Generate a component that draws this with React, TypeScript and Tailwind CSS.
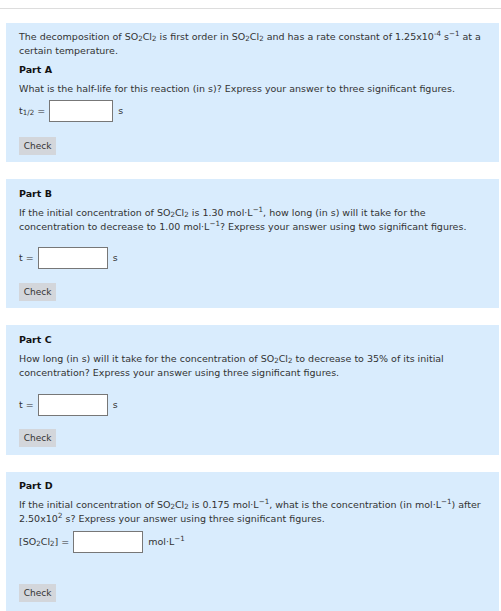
import type { ReactNode } from 'react'

const sub = (s: string) => <sub className="relative top-[1px] align-baseline text-[0.75em] leading-none">{s}</sub>
const sup = (s: string) => <sup className="relative -top-[4px] align-baseline text-[0.75em] leading-none">{s}</sup>

const so2cl2 = (
  <>
    SO{sub('2')}Cl{sub('2')}
  </>
)

const molL = (
  <>
    mol·L{sup('−1')}
  </>
)

function Panel({ children, className = '' }: { children: ReactNode; className?: string }) {
  return <div className={`ml-[6px] mr-[2px] bg-[#d9ecfd] pl-[13px] pr-[16px] ${className}`}>{children}</div>
}

function AnswerRow({ label, unit, inputW = 'w-[64px]' }: { label: ReactNode; unit: ReactNode; inputW?: string }) {
  return (
    <div className="flex items-center">
      <span className="mr-[4px]">{label}</span>
      <input
        type="text"
        className={`h-[22px] ${inputW} border border-[#777] bg-white outline-none`}
      />
      <span className="ml-[5px]">{unit}</span>
    </div>
  )
}

function CheckButton() {
  return (
    <button
      type="button"
      className="h-[18px] w-[37px] bg-[#d3d6db] text-[9px] text-[#333]"
    >
      Check
    </button>
  )
}

export default function App() {
  return (
    <div
      className="h-[611px] w-[501px] overflow-hidden bg-white pt-[8px] text-[9.5px] leading-[14px] text-[#333]"
      style={{ fontFamily: '"DejaVu Sans", Verdana, sans-serif' }}
    >
      <div className="h-px bg-[#ddd]" />

      <Panel className="mt-[14px] h-[139px] pt-[7px]">
        <p>
          The decomposition of {so2cl2} is first order in {so2cl2} and has a rate constant of 1.25x10
          {sup('-4')} s{sup('−1')} at a certain temperature.
        </p>
        <h3 className="mt-[5px] font-bold text-[#111]">Part A</h3>
        <p className="mt-[5px]">
          What is the half-life for this reaction (in s)? Express your answer to three significant figures.
        </p>
        <div className="mt-[4px]">
          <AnswerRow
            label={
              <>
                t{sub('1/2')} =
              </>
            }
            unit="s"
          />
        </div>
        <div className="mt-[15px]">
          <CheckButton />
        </div>
      </Panel>

      <Panel className="mt-[17px] h-[129px] pt-[8px]">
        <h3 className="font-bold text-[#111]">Part B</h3>
        <p className="mt-[5px]">
          If the initial concentration of {so2cl2} is 1.30 {molL}, how long (in s) will it take for the
          concentration to decrease to 1.00 {molL}? Express your answer using two significant figures.
        </p>
        <div className="mt-[13px]">
          <AnswerRow label="t =" unit="s" inputW="w-[70px]" />
        </div>
        <div className="mt-[14px]">
          <CheckButton />
        </div>
      </Panel>

      <Panel className="mt-[17px] h-[130px] pt-[8px]">
        <h3 className="font-bold text-[#111]">Part C</h3>
        <p className="mt-[5px]">
          How long (in s) will it take for the concentration of {so2cl2} to decrease to 35% of its initial
          concentration? Express your answer using three significant figures.
        </p>
        <div className="mt-[14px]">
          <AnswerRow label="t =" unit="s" inputW="w-[70px]" />
        </div>
        <div className="mt-[13px]">
          <CheckButton />
        </div>
      </Panel>

      <Panel className="mt-[17px] h-[140px] pt-[7px]">
        <h3 className="font-bold text-[#111]">Part D</h3>
        <p className="mt-[5px]">
          If the initial concentration of {so2cl2} is 0.175 {molL}, what is the concentration (in {molL}) after
          2.50x10{sup('2')} s? Express your answer using three significant figures.
        </p>
        <div className="mt-[5px]">
          <AnswerRow label={<>[{so2cl2}] =</>} unit={molL} inputW="w-[70px]" />
        </div>
        <div className="mt-[31px]">
          <CheckButton />
        </div>
      </Panel>
    </div>
  )
}
